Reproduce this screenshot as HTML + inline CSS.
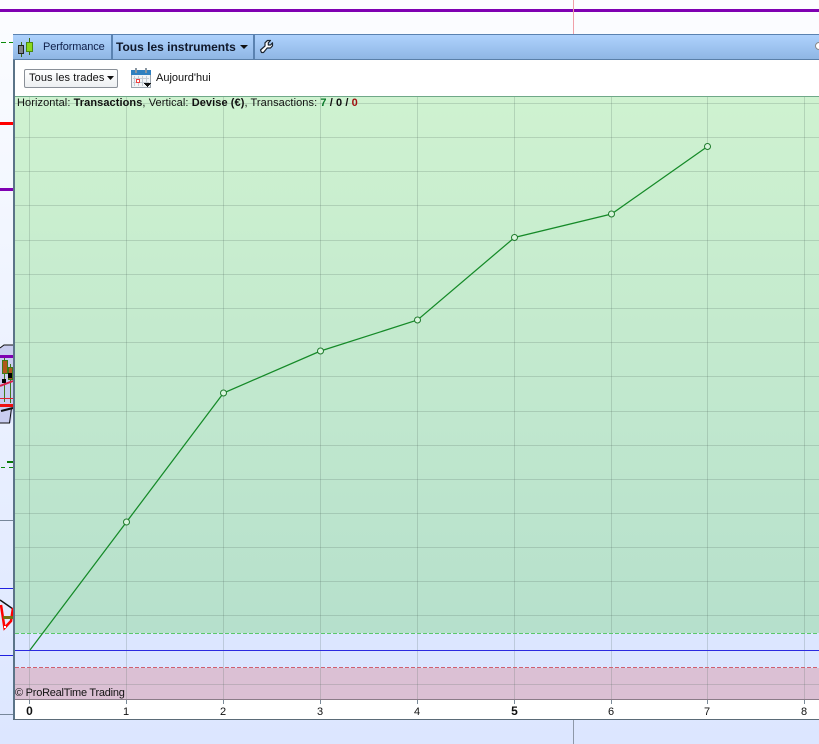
<!DOCTYPE html>
<html><head><meta charset="utf-8"><style>
html,body{margin:0;padding:0;width:819px;height:744px;overflow:hidden}
body{position:relative;background:linear-gradient(#fcfdff,#dce6ff);font-family:"Liberation Sans",sans-serif;color:#111}
.a{position:absolute;white-space:nowrap}
</style></head><body>
<svg class="a" style="left:0;top:0" width="819" height="744" shape-rendering="crispEdges">
<rect x="0" y="9" width="819" height="3" fill="#7f00b2"/>
<rect x="573" y="0" width="1" height="34" fill="#f0a0a8"/>
<rect x="573" y="719" width="1" height="25" fill="#8e98a8"/>
<path d="M1 42.500H13" stroke="#0a8a0a" stroke-dasharray="5 3"/>
<rect x="0" y="122" width="13" height="3" fill="#f00"/>
<rect x="0" y="188" width="13" height="3" fill="#7f00b2"/>
<rect x="7" y="461" width="6" height="2" fill="#0a7a0a"/>
<path d="M1 467.500H13" stroke="#0a8a0a" stroke-dasharray="4 4"/>
<rect x="0" y="520" width="13" height="1" fill="#77879a"/>
<rect x="0" y="588" width="13" height="1" fill="#2020e0"/>
<rect x="0" y="655" width="13" height="1" fill="#2020e0"/>
<rect x="0" y="714" width="13" height="1" fill="#77879a"/>
</svg>
<svg class="a" style="left:0;top:340px" width="14" height="90">
<path d="M0 8L4 5H13V68L11 83H0Z" fill="#c9cdf0"/>
<path d="M0 8L4 5H13M0 83H9.500L11.500 68" fill="none" stroke="#111" stroke-width="1"/>
<rect x="0" y="15" width="13" height="3" fill="#7f00b2"/>
<g shape-rendering="crispEdges">
<path d="M4.500 18V62M10.500 24V63" stroke="#3f7a1a"/>
<rect x="2" y="20" width="6" height="14" fill="#3f7a1a"/>
<rect x="3" y="21" width="4" height="12" fill="#b0561c"/>
<rect x="8" y="27" width="5" height="13" fill="#3f7a1a"/>
<rect x="9" y="28" width="3" height="11" fill="#b0561c"/>
<rect x="2" y="39" width="4" height="4" fill="#000"/>
<rect x="8" y="33" width="4" height="5" fill="#000"/>
</g>
<path d="M0 46L13 41" stroke="#d8204a" stroke-width="2"/>
<rect x="0" y="58" width="13" height="1" fill="#e02030"/>
<rect x="0" y="64" width="13" height="3" fill="#f01010"/>
<path d="M1 71L13 68" stroke="#111" stroke-width="2"/>
</svg>
<svg class="a" style="left:0;top:595px" width="14" height="40">
<path d="M0 5L13 14" stroke="#111" stroke-width="1.500" fill="none"/>
<path d="M1 10L4.500 33L11 26L13 13" stroke="#f00" stroke-width="2.500" fill="none"/>
<rect x="3" y="21" width="10" height="3" fill="#757010"/>
<rect x="4" y="31" width="2" height="2" fill="#fff"/>
</svg>

<div class="a" style="left:13px;top:34px;width:806px;height:686px;background:#fff">
<div class="a" style="left:0;top:0;width:2px;height:686px;background:#5b7488"></div>
<div class="a" style="left:0;top:685px;width:806px;height:1px;background:#5b6b78"></div>
<div class="a" style="left:0;top:0;width:806px;height:26px;box-sizing:border-box;border-top:1px solid #5a82b0;border-bottom:1px solid #5a7fa8;background:linear-gradient(#aed2fd,#8fb6e4)"></div>
<div class="a" style="left:98px;top:1px;width:2px;height:24px;background:#5a82b0"></div>
<div class="a" style="left:240px;top:1px;width:2px;height:24px;background:#5a82b0"></div>
</div>

<svg class="a" style="left:15px;top:35px" width="20" height="24" shape-rendering="crispEdges">
<path d="M6.500 7V22M14.500 3V20" stroke="#3a6a10"/>
<rect x="3.500" y="10.500" width="5" height="8" fill="#808488" stroke="#222"/>
<rect x="11.500" y="7.500" width="6" height="9" fill="#8cd820" stroke="#4a8a10"/>
</svg>
<div class="a" style="left:43px;top:41px;font-size:11px;line-height:13px;color:#10204a;letter-spacing:-.12px">Performance</div>
<div class="a" style="left:116px;top:40px;font-size:12px;font-weight:bold;color:#10182a">Tous les instruments</div>
<svg class="a" style="left:240px;top:45px" width="8" height="5"><path d="M0 0H8L4 4Z" fill="#111"/></svg>
<svg class="a" style="left:259px;top:39px" width="15" height="15"><path d="M1.500 11L6 7V3.800L8.500 1.500H11.500L9.300 3.800V6H11.500L13.500 3.800V6.800L11.500 9H8.200L4.500 13.500H2.500Z" fill="#fff" stroke="#1a2430" stroke-width="1.200" stroke-linejoin="round"/></svg>
<div class="a" style="left:815px;top:42px;width:6px;height:6px;border-radius:50%;background:#fff;border:1px solid #888"></div>

<div class="a" style="left:24px;top:69px;width:92px;height:17px;border:1px solid #8a9098;border-radius:2px;background:linear-gradient(#fff,#eef0f2)"></div>
<div class="a" style="left:29px;top:72px;font-size:11px;line-height:13px;color:#111;letter-spacing:.1px">Tous les trades</div>
<svg class="a" style="left:107px;top:76px" width="7" height="4"><path d="M0 0H7L3.500 4Z" fill="#111"/></svg>
<svg class="a" style="left:131px;top:68px" width="21" height="21" shape-rendering="crispEdges">
<rect x="0.500" y="2.500" width="19" height="17" fill="#f2f4f6" stroke="#9aa4ae"/>
<rect x="0" y="2" width="20" height="5" fill="#2f80c0"/>
<rect x="4" y="0" width="2" height="5" fill="#8a96a0"/><rect x="14" y="0" width="2" height="5" fill="#8a96a0"/>
<path d="M3.500 8V18M7.500 8V18M11.500 8V18M15.500 8V18M2 10.500H18M2 14.500H18" stroke="#c4ccd4"/>
<rect x="5.500" y="11.500" width="3" height="3" fill="#fff" stroke="#f04040"/>
<rect x="13" y="15" width="7" height="1" fill="#111"/><rect x="14" y="16" width="5" height="1" fill="#111"/><rect x="15" y="17" width="3" height="1" fill="#111"/><rect x="16" y="18" width="1" height="1" fill="#111"/>
</svg>
<div class="a" style="left:156px;top:72px;font-size:11px;line-height:13px;color:#111">Aujourd'hui</div>

<svg class="a" style="left:0;top:0" width="819" height="744">
<defs><linearGradient id="g" x1="0" y1="0" x2="0" y2="1"><stop offset="0" stop-color="#cff2d0"/><stop offset="1" stop-color="#b6e0cc"/></linearGradient></defs>
<g shape-rendering="crispEdges">
<rect x="15" y="96" width="804" height="537" fill="url(#g)"/>
<rect x="15" y="633" width="804" height="35" fill="#dce6ff"/>
<rect x="15" y="668" width="804" height="31" fill="#dbc0d4"/>
<rect x="15" y="96" width="804" height="1" fill="#6fa888"/>
<g stroke="#506860" stroke-opacity=".22" fill="none">
<path d="M15 103.500H819M15 137.500H819M15 171.500H819M15 205.500H819M15 240.500H819M15 274.500H819M15 308.500H819M15 342.500H819M15 376.500H819M15 411.500H819M15 445.500H819M15 479.500H819M15 513.500H819M15 547.500H819M15 581.500H819M15 615.500H819M15 684.500H819"/>
<path d="M29.500 97V699M126.500 97V699M223.500 97V699M320.500 97V699M417.500 97V699M514.500 97V699M611.500 97V699M707.500 97V699M804.500 97V699"/>
</g>
<path d="M15 633.500H819" stroke="#5cc86c" stroke-dasharray="4 2"/>
<path d="M15 667.500H819" stroke="#d06070" stroke-dasharray="4 2"/>
<rect x="15" y="650" width="804" height="1" fill="#2a2ae0"/>
<rect x="15" y="699" width="804" height="1" fill="#8a7c88"/>
<path d="M29.500 700V704M126.500 700V704M223.500 700V704M320.500 700V704M417.500 700V704M514.500 700V704M611.500 700V704M707.500 700V704M804.500 700V704" stroke="#7a8a98"/>
</g>
<polyline points="30,650 126.500,522 223.500,393 320.500,351 417.500,320 514.500,237.500 611.500,214 707.500,146.500" fill="none" stroke="#158a28" stroke-width="1.250"/>
<g fill="#d8f4dc" stroke="#1f7a2c" stroke-width="1">
<circle cx="126.500" cy="522" r="3"/><circle cx="223.500" cy="393" r="3"/><circle cx="320.500" cy="351" r="3"/><circle cx="417.500" cy="320" r="3"/><circle cx="514.500" cy="237.500" r="3"/><circle cx="611.500" cy="214" r="3"/><circle cx="707.500" cy="146.500" r="3"/>
</g>
<g font-family="Liberation Sans, sans-serif" font-size="11" text-anchor="middle" fill="#111">
<text x="29.500" y="715" font-weight="bold" font-size="12">0</text>
<text x="126" y="715">1</text><text x="223" y="715">2</text><text x="320" y="715">3</text><text x="417" y="715">4</text>
<text x="514.500" y="715" font-weight="bold" font-size="12">5</text>
<text x="611" y="715">6</text><text x="707" y="715">7</text><text x="804" y="715">8</text>
</g>
</svg>
<div class="a" style="left:17px;top:97px;font-size:11px;line-height:13px;color:#111;letter-spacing:.08px">Horizontal: <b>Transactions</b>, Vertical: <b>Devise (€)</b>, Transactions: <b style="color:#0a7a2a">7</b> <b>/</b> <b>0</b> <b>/</b> <b style="color:#a01010">0</b></div>
<div class="a" style="left:15px;top:687px;font-size:11px;line-height:13px;color:#111;letter-spacing:-.24px">© ProRealTime Trading</div>
</body></html>
